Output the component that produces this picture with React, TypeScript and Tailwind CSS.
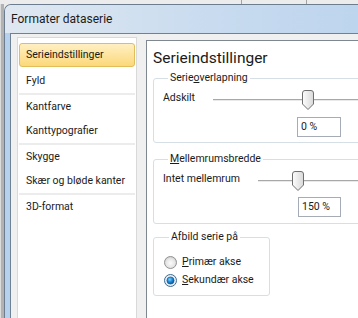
import React from "react";

function Thumb({ left }: { left: number }) {
  return (
    <svg
      className="absolute top-[1px]"
      style={{ left }}
      width="12"
      height="20"
      viewBox="0 0 12 20"
    >
      <defs>
        <linearGradient id="tg" x1="0" y1="0" x2="1" y2="0">
          <stop offset="0" stopColor="#fdfdfd" />
          <stop offset="1" stopColor="#d9d9d9" />
        </linearGradient>
      </defs>
      <path
        d="M0.5 3 Q0.5 0.5 3 0.5 H9 Q11.5 0.5 11.5 3 V14 L6 19.5 L0.5 14 Z"
        fill="url(#tg)"
        stroke="#6f6f6f"
      />
    </svg>
  );
}

function Track({ left }: { left: number }) {
  return (
    <div className="relative flex-1">
      <div className="mt-[10px] h-px bg-[#a8a8a8]" />
      <div className="h-px bg-[#e9e9e9]" />
      <Thumb left={left} />
    </div>
  );
}

function Radio({ checked }: { checked?: boolean }) {
  return (
    <svg width="13" height="13" viewBox="0 0 13 13" className="shrink-0">
      <defs>
        <radialGradient id="ru" cx="0.5" cy="0.55" r="0.6">
          <stop offset="0" stopColor="#fbfbfb" />
          <stop offset="0.6" stopColor="#e6e6e6" />
          <stop offset="1" stopColor="#c4c4c4" />
        </radialGradient>
        <radialGradient id="rd" cx="0.4" cy="0.35" r="0.7">
          <stop offset="0" stopColor="#7fd3fb" />
          <stop offset="0.5" stopColor="#1a8ad8" />
          <stop offset="1" stopColor="#0b4a8e" />
        </radialGradient>
      </defs>
      <circle
        cx="6.5"
        cy="6.5"
        r="6"
        fill={checked ? "#e7eef5" : "url(#ru)"}
        stroke={checked ? "#3d6a91" : "#939393"}
      />
      {checked && <circle cx="6.5" cy="6.5" r="3.6" fill="url(#rd)" stroke="#1b4f80" strokeWidth="0.6" />}
    </svg>
  );
}

const items: (string | null)[] = [
  "Fyld",
  null,
  "Kantfarve",
  "Kanttypografier",
  null,
  "Skygge",
  "Skær og bløde kanter",
  null,
  "3D-format",
];

export default function App() {
  return (
    <div className="w-[358px] h-[318px] overflow-hidden flex flex-col bg-[#ececec] font-['Roboto',sans-serif] text-[#1b1b1b]">
      <div className="shrink-0 h-[4px] flex">
        <div className="w-[242px] border-r border-[#a3a3a3]" />
        <div className="w-[65px] border-r border-[#a3a3a3]" />
      </div>
      <div className="flex-1 flex">
        <div className="shrink-0 w-[4px] border-l border-[#dcdcdc] bg-[#b2b2b2]" />
        <div className="shrink-0 w-[420px] h-[340px] flex flex-col rounded-tl-[7px] border-l border-t border-[#6b7d8f] bg-[#b6d1ee]">
          <div className="shrink-0 h-[28px] flex items-center pl-[6px] text-[12px] rounded-tl-[6px] bg-gradient-to-r from-[#dfe8f1] via-[#c8dbef] to-[#b9d2ee]">
            Formater dataserie
          </div>
          <div className="flex-1 flex pl-[5px]">
            <div className="flex-1 flex items-start border-l border-t border-[#6f8294] bg-[#f0f0f0]">
              <div className="shrink-0 ml-[6px] mt-[3px] w-[120px] h-[320px] border border-[#d9d9d9] bg-white pt-[5px] px-[1px] text-[10.5px]">
                <div className="h-[24px] mb-[2px] flex items-center pl-[6px] rounded-[3px] border border-[#e1bd5c] bg-gradient-to-b from-[#fff0c2] to-[#fbd878]">
                  Serieindstillinger
                </div>
                {items.map((it, i) =>
                  it === null ? (
                    <div key={i} className="h-[2px] bg-[#ececec]" />
                  ) : (
                    <div key={i} className="h-[24px] flex items-center pl-[7px] whitespace-nowrap">
                      {it}
                    </div>
                  )
                )}
              </div>
              <div className="shrink-0 ml-[9px] mt-[6px] w-[270px] h-[320px] border-l border-t border-[#7f8790] bg-white pl-[6px]">
                <div className="mt-[7px] h-[20px] leading-[20px] text-[15.5px]">Serieindstillinger</div>
                <fieldset className="mt-[2px] w-[260px] rounded-[3px] border border-[#d5dfe5] pl-[9px] pb-[5px] text-[10.5px]">
                  <legend className="ml-[5px] px-[2px] leading-[16px]">
                    Serie<span className="underline">o</span>verlapning
                  </legend>
                  <div className="mt-[3px] flex h-[21px]">
                    <div className="w-[50px] h-[18px] leading-[18px]">Adskilt</div>
                    <Track left={89} />
                  </div>
                  <div className="mt-[7px] ml-[134px] w-[44px] h-[20px] border border-[#a5acb5] pl-[3px] leading-[18px]">
                    0 %
                  </div>
                </fieldset>
                <fieldset className="mt-[8px] w-[260px] rounded-[3px] border border-[#d5dfe5] pl-[9px] pb-[6px] text-[10.5px]">
                  <legend className="ml-[5px] px-[2px] leading-[16px]">
                    <span className="underline">M</span>ellemrumsbredde
                  </legend>
                  <div className="mt-[3px] flex h-[21px]">
                    <div className="w-[95px] h-[18px] leading-[18px]">Intet mellemrum</div>
                    <Track left={34} />
                  </div>
                  <div className="mt-[6px] ml-[135px] w-[43px] h-[20px] border border-[#a5acb5] pl-[3px] leading-[18px]">
                    150 %
                  </div>
                </fieldset>
                <fieldset className="mt-[5px] w-[117px] rounded-[3px] border border-[#d5dfe5] pl-[10px] pt-[8px] pb-[6px] text-[10.5px]">
                  <legend className="ml-[5px] px-[2px] leading-[16px]">Afbild serie på</legend>
                  <div className="flex h-[18px] items-center gap-[5px]">
                    <Radio />
                    <span>
                      <span className="underline">P</span>rimær akse
                    </span>
                  </div>
                  <div className="flex h-[18px] items-center gap-[5px]">
                    <Radio checked />
                    <span>
                      <span className="underline">S</span>ekundær akse
                    </span>
                  </div>
                </fieldset>
              </div>
            </div>
          </div>
        </div>
      </div>
    </div>
  );
}
